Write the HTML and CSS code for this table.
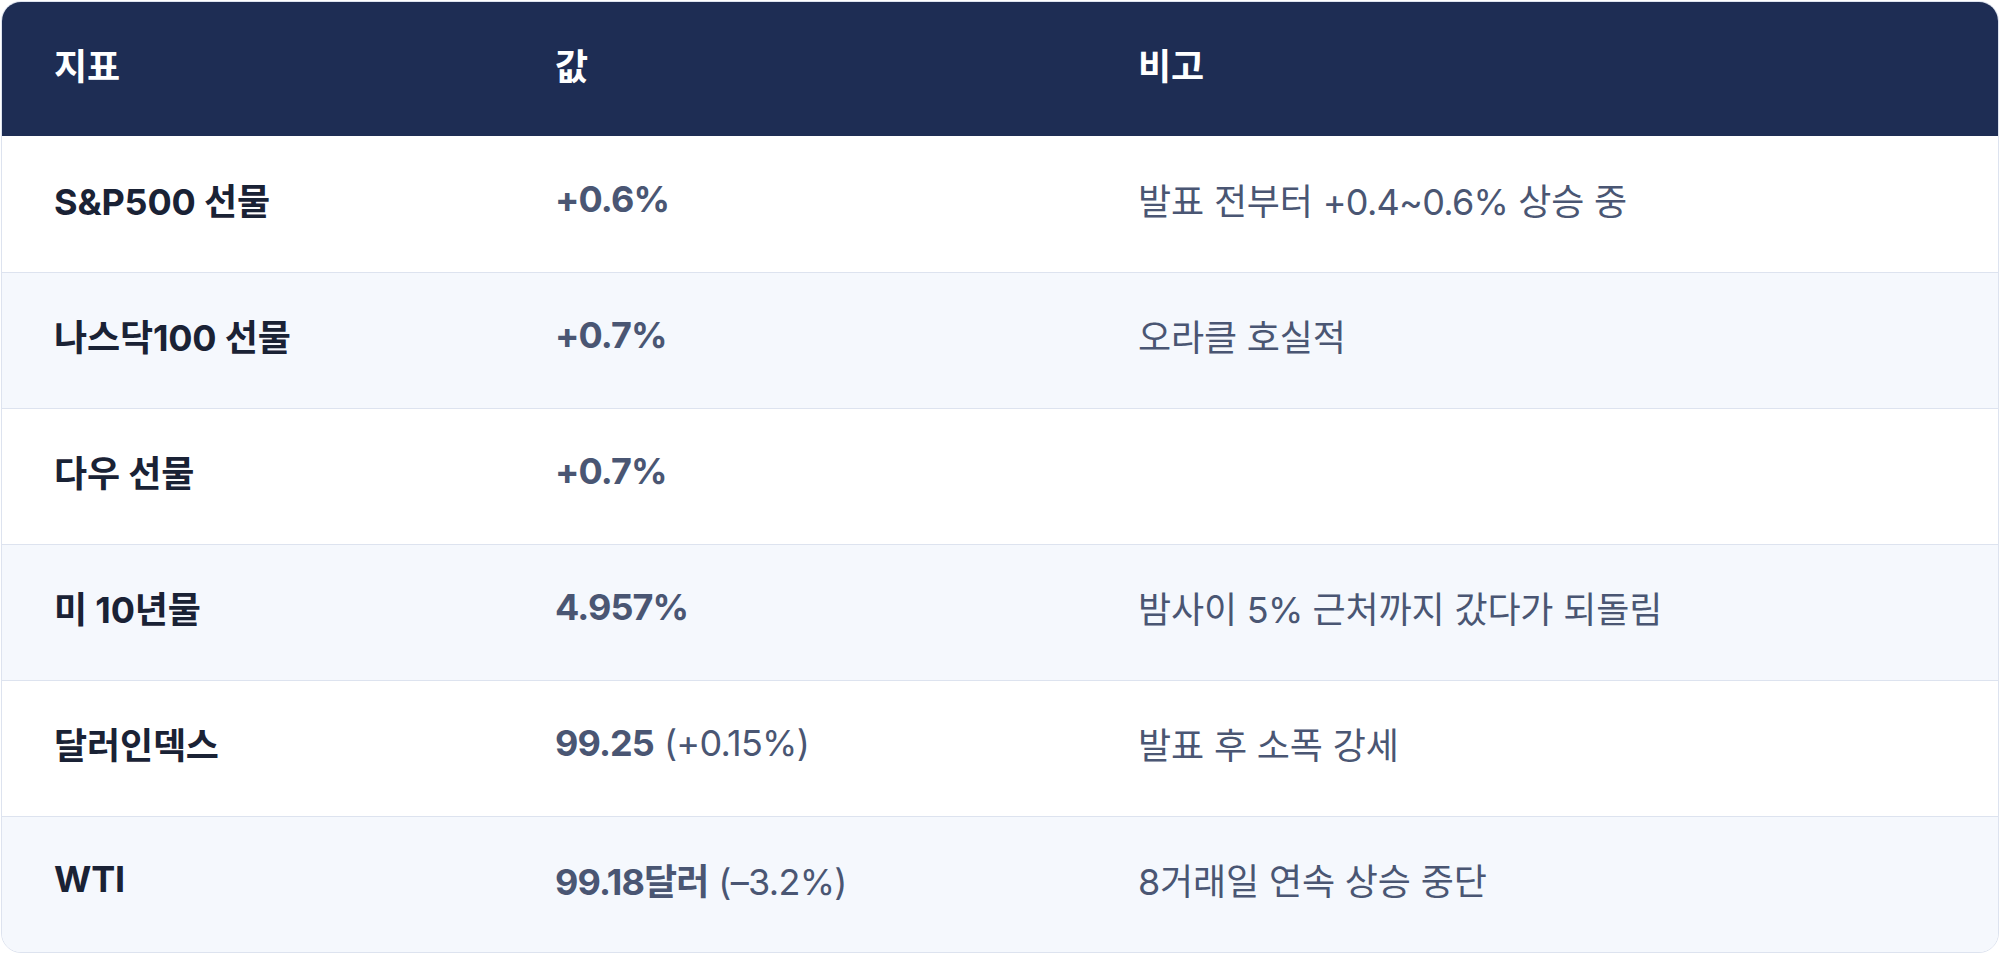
FILE: index.html
```html
<!DOCTYPE html>
<html lang="ko">
<head>
<meta charset="utf-8">
<title>지표</title>
<link rel="stylesheet" href="styles.css">
</head>
<body>
<div class="card">
  <table class="tbl">
    <colgroup>
      <col class="c1"><col class="c2"><col class="c3">
    </colgroup>
    <thead>
      <tr><th>지표</th><th>값</th><th>비고</th></tr>
    </thead>
    <tbody>
      <tr><td class="name">S&amp;P500 선물</td><td class="val"><b>+0.6%</b></td><td class="note">발표 전부터 <span class="num">+0.4~0.6%</span> 상승 중</td></tr>
      <tr><td class="name">나스닥100 선물</td><td class="val"><b>+0.7%</b></td><td class="note">오라클 호실적</td></tr>
      <tr><td class="name">다우 선물</td><td class="val"><b>+0.7%</b></td><td class="note"></td></tr>
      <tr><td class="name">미 10년물</td><td class="val"><b>4.957%</b></td><td class="note">밤사이 <span class="num">5%</span> 근처까지 갔다가 되돌림</td></tr>
      <tr><td class="name">달러인덱스</td><td class="val"><b>99.25</b> <span class="num">(+0.15%)</span></td><td class="note">발표 후 소폭 강세</td></tr>
      <tr><td class="name">WTI</td><td class="val"><b>99.18달러</b> <span class="num">(–3.2%)</span></td><td class="note">8거래일 연속 상승 중단</td></tr>
    </tbody>
  </table>
</div>
</body>
</html>
```
FILE: styles.css
```css
html, body {
  margin: 0;
  padding: 0;
  background: #ffffff;
}
body {
  padding: 1px;
  font-family: Inter, "Noto Sans CJK KR", sans-serif;
  letter-spacing: -0.01em;
}
.card {
  border: 1px solid #dde3ef;
  border-radius: 20px;
  overflow: hidden;
  background: #ffffff;
}
.tbl {
  width: 100%;
  border-collapse: collapse;
  table-layout: fixed;
}
.c1 { width: 501px; }
.c2 { width: 583px; }
.tbl th {
  background: #1e2d54;
  color: #ffffff;
  font-weight: 700;
  font-size: 36px;
  text-align: left;
  height: 134px;
  padding: 0 0 10px 52px;
  box-sizing: border-box;
}
.tbl td {
  height: 136px;
  padding: 0 0 10px 52px;
  box-sizing: border-box;
  font-size: 36px;
  border-bottom: 1px solid #dde3ef;
  vertical-align: middle;
}
.tbl tbody tr:nth-child(even) td {
  background: #f5f8fd;
}
.tbl tbody tr:last-child td {
  border-bottom: none;
}
.name {
  color: #1a2235;
  font-weight: 700;
}
.val {
  color: #4a5673;
  font-weight: 400;
}
.val b {
  font-weight: 700;
  letter-spacing: -0.025em;
}
.num {
  letter-spacing: -0.02em;
}
.note {
  color: #4a5673;
  font-weight: 400;
}
```
